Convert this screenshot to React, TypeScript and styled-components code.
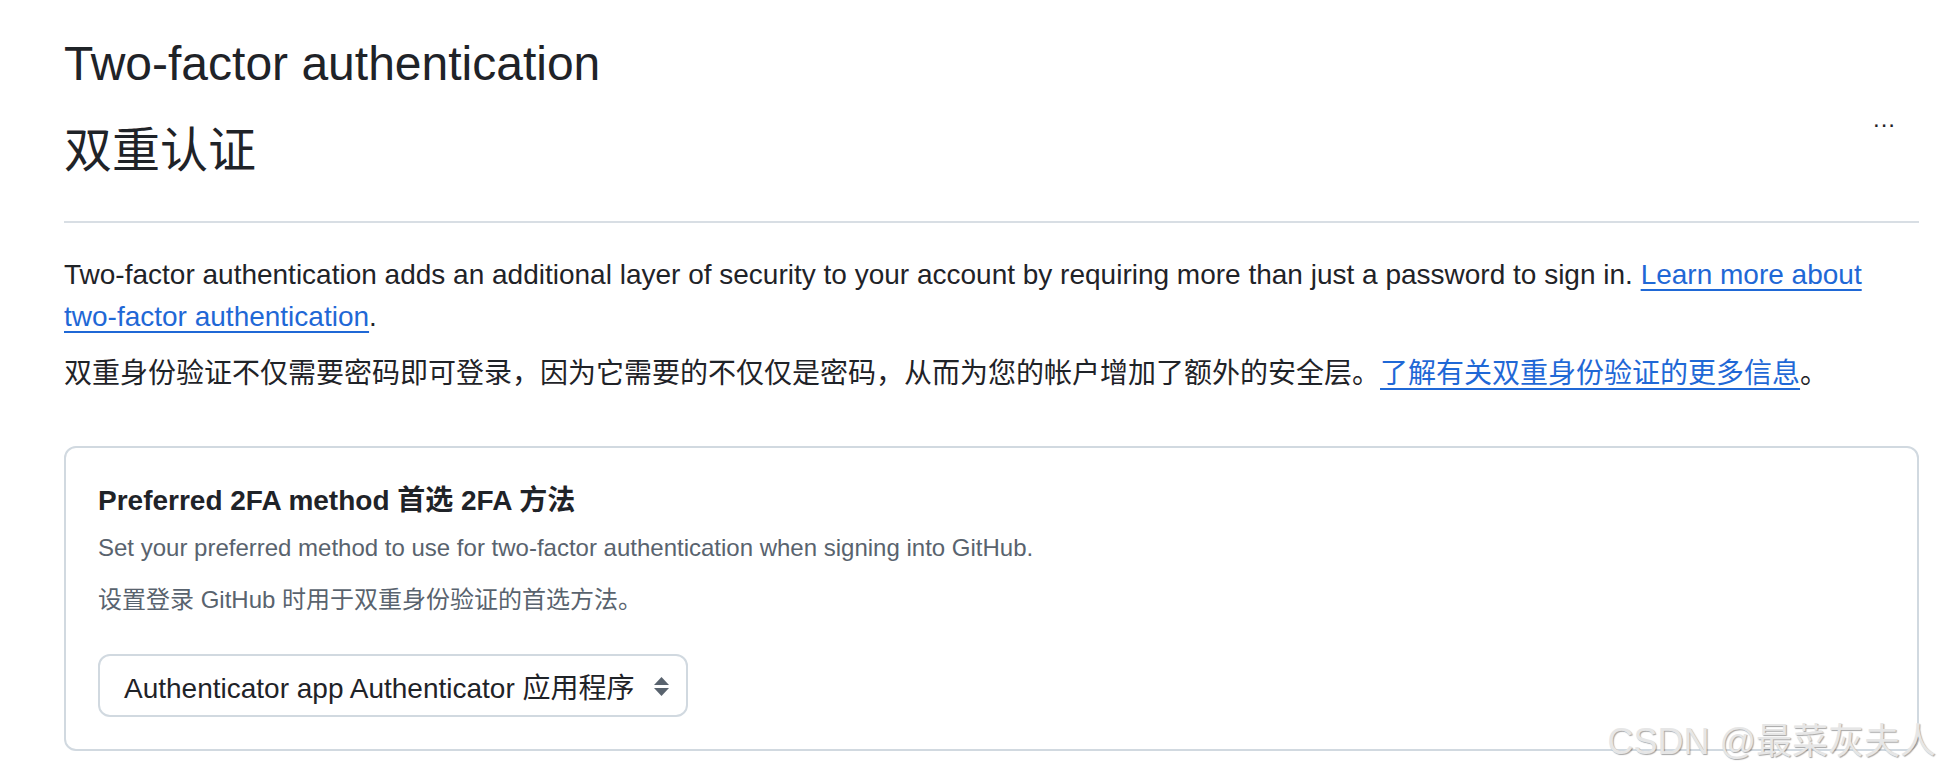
import React from "react";
import styled, { createGlobalStyle } from "styled-components";

const GlobalStyle = createGlobalStyle`
  html, body {
    margin: 0;
    padding: 0;
    background: #ffffff;
  }
  body {
    font-family: "Liberation Sans", Arial, "Noto Sans CJK SC", sans-serif;
    color: #1f2328;
  }
`;

const Page = styled.main`
  position: relative;
  min-height: 773px;
  padding: 28px 24px 0 64px;
  box-sizing: border-box;
`;

const Subhead = styled.div`
  display: flex;
  align-items: flex-start;
  padding-bottom: 34px;
  border-bottom: 2px solid #d8dee4;
  margin-bottom: 31px;
`;

const Heading = styled.h2`
  flex: 1;
  margin: 0;
  font-size: 48px;
  font-weight: 400;
  line-height: 72px;
`;

const Translation = styled.span`
  display: block;
  margin-top: 15px;
`;

const Actions = styled.div`
  margin-top: 73px;
  margin-right: 23px;
  font-size: 24px;
  line-height: 36px;
  letter-spacing: 1px;
`;

const Paragraph = styled.p<{ $gap?: number }>`
  margin: 0 0 ${(p) => p.$gap ?? 0}px;
  font-size: 28px;
  line-height: 42px;
`;

const Link = styled.a`
  color: #1f68d6;
  text-decoration: underline;
  text-decoration-thickness: 2px;
  text-underline-offset: 5px;
`;

const Box = styled.section`
  margin-top: 51px;
  border: 2px solid #d1d9e0;
  border-radius: 12px;
  padding: 32px;
`;

const BoxTitle = styled.h3`
  margin: 0 0 8px;
  font-size: 28px;
  font-weight: 700;
  line-height: 42px;
`;

const Note = styled.p<{ $gap?: number }>`
  margin: 0 0 ${(p) => p.$gap ?? 0}px;
  font-size: 24px;
  line-height: 36px;
  color: #59636e;
`;

const SelectWrap = styled.div`
  display: inline-flex;
  align-items: center;
  gap: 18px;
  height: 63px;
  box-sizing: border-box;
  padding: 0 16px 0 24px;
  border: 2px solid #d1d9e0;
  border-radius: 12px;
  background: #ffffff;
  font-size: 28px;
  color: #1f2328;
`;

const Watermark = styled.div`
  position: absolute;
  right: 7px;
  bottom: 13px;
  font-size: 36px;
  line-height: 36px;
  color: #e6e6e6;
  text-shadow: 1px 1px 1px rgba(0, 0, 0, 0.35);
  white-space: nowrap;
`;

const SortIcon = () => (
  <svg width="17" height="24" viewBox="0 0 17 24" aria-hidden>
    <path d="M8.5 3 L16 11 H1 Z" fill="#59636e" />
    <path d="M8.5 22 L16 14 H1 Z" fill="#59636e" />
  </svg>
);

export default function App() {
  return (
    <>
      <GlobalStyle />
      <Page>
        <Subhead>
          <Heading>
            Two-factor authentication
            <Translation>双重认证</Translation>
          </Heading>
          <Actions>...</Actions>
        </Subhead>

        <Paragraph $gap={15}>
          Two-factor authentication adds an additional layer of security to your account by
          requiring more than just a password to sign in.{" "}
          <Link href="#">Learn more about two-factor authentication</Link>.
        </Paragraph>
        <Paragraph>
          双重身份验证不仅需要密码即可登录，因为它需要的不仅仅是密码，从而为您的帐户增加了额外的安全层。
          <Link href="#">了解有关双重身份验证的更多信息</Link>。
        </Paragraph>

        <Box>
          <BoxTitle>Preferred 2FA method 首选 2FA 方法</BoxTitle>
          <Note $gap={16}>
            Set your preferred method to use for two-factor authentication when signing into
            GitHub.
          </Note>
          <Note $gap={36}>设置登录 GitHub 时用于双重身份验证的首选方法。</Note>
          <SelectWrap>
            <span>Authenticator app Authenticator 应用程序</span>
            <SortIcon />
          </SelectWrap>
        </Box>

        <Watermark>CSDN @最菜灰夫人</Watermark>
      </Page>
    </>
  );
}
